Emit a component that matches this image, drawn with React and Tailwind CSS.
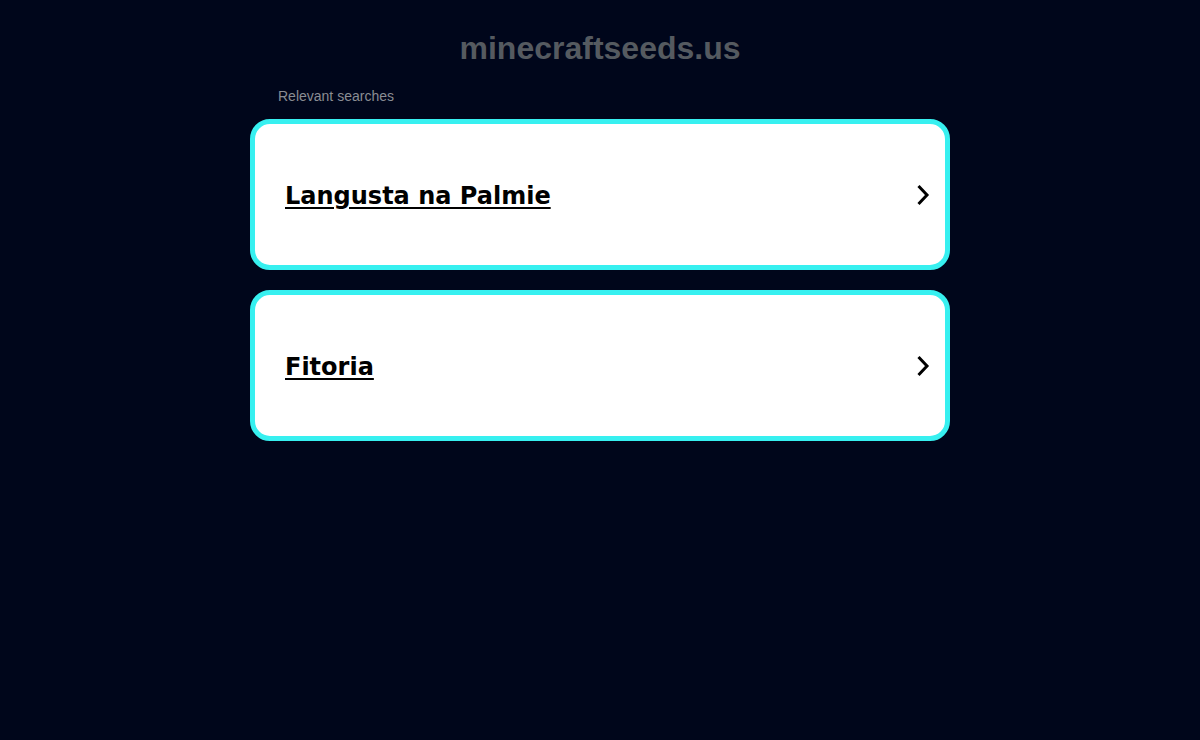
import React from "react";

function Chevron() {
  return (
    <svg width="16" height="22" viewBox="0 0 16 22" fill="none" className="shrink-0">
      <path d="M4.5 2 L13 11 L4.5 20" stroke="#000" strokeWidth="3" strokeLinecap="butt" strokeLinejoin="miter" />
    </svg>
  );
}

function Card({ label }) {
  return (
    <a href="#" className="flex h-[151px] items-center justify-between rounded-[20px] border-[5px] border-[#37f0f0] bg-white pl-[30px] pr-[15px]">
      <span className="pt-[2px] text-[24px] font-bold text-black underline decoration-2 underline-offset-[3px] [font-family:'DejaVu_Sans',Verdana,sans-serif]">
        {label}
      </span>
      <Chevron />
    </a>
  );
}

export default function App() {
  return (
    <div className="min-h-[740px] w-full bg-[#00061b] [font-family:'Liberation_Sans',Arial,sans-serif]">
      <div className="mx-auto flex w-[700px] flex-col pt-[28px]">
        <h1 className="text-center text-[32px] font-bold leading-[40px] text-[#555a60]">minecraftseeds.us</h1>
        <div className="mt-[20px] pl-[28px] text-[14px] leading-[16px] text-[#8a8d93]">Relevant searches</div>
        <div className="mt-[15px] flex flex-col gap-[20px]">
          <Card label="Langusta na Palmie" />
          <Card label="Fitoria" />
        </div>
      </div>
    </div>
  );
}
